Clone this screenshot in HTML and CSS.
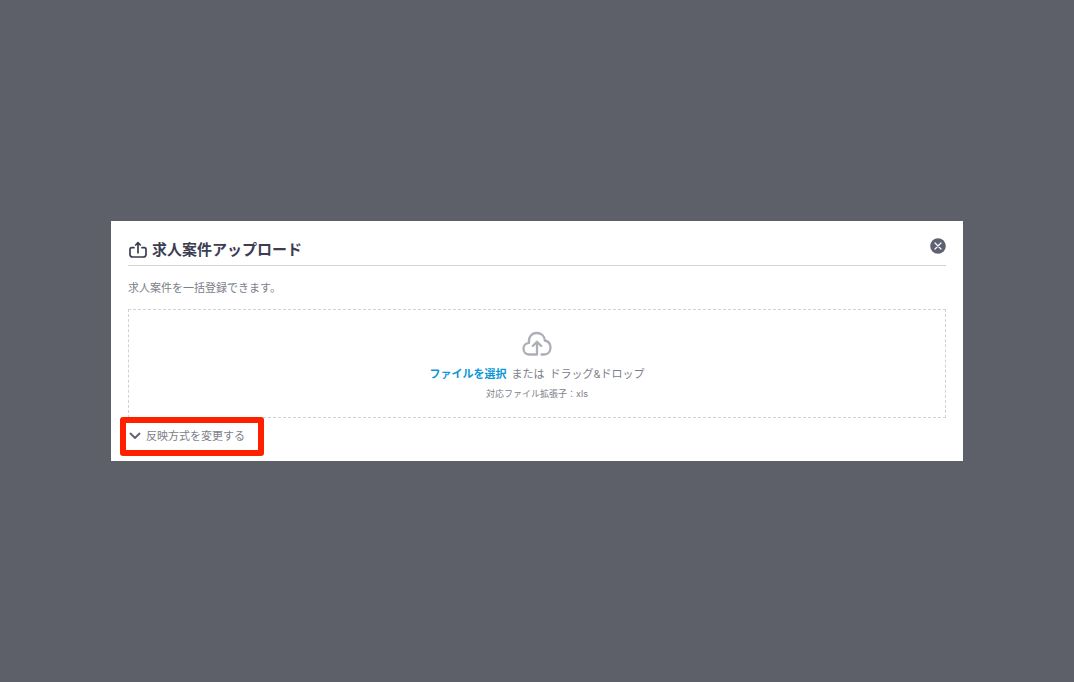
FILE: index.html
```html
<!DOCTYPE html>
<html lang="ja">
<head>
  <meta charset="UTF-8" />
  <meta name="viewport" content="width=device-width, initial-scale=1.0"/>
  <title>求人案件アップロード</title>
  <link rel="stylesheet" href="styles.css">
</head>
<body>
  <div class="modal" role="dialog" aria-labelledby="modal-title">
    <div class="modal-header">
      <svg class="icon-upload" viewBox="0 0 20 18" aria-hidden="true">
        <path d="M6 6.7H3.7Q2 6.7 2 8.4V13.2Q2 16 4.8 16H15.2Q18 16 18 13.2V8.4Q18 6.7 16.3 6.7H14M10 11.8V2M7.7 4L10 1.7L12.3 4"/>
      </svg>
      <h1 class="modal-title" id="modal-title">求人案件アップロード</h1>
      <button class="close" type="button" aria-label="閉じる">
        <svg viewBox="0 0 16 16" aria-hidden="true">
          <circle cx="8" cy="8" r="7.8"/>
          <path d="M5 5L11 11M11 5L5 11"/>
        </svg>
      </button>
    </div>

    <p class="lead">求人案件を一括登録できます。</p>

    <div class="dropzone">
      <svg class="icon-cloud" viewBox="0 0 30 26" aria-hidden="true">
        <path d="M15 23.5H7.5C4 23.5 1.5 21 1.5 17.7C1.5 14.5 4 12 7 11.8C6.2 6.5 9.5 2 14.7 2C19.3 2 22.6 5 22.8 9.5C26.3 10.2 28.5 13 28.5 16.5C28.5 20.5 25.8 23.5 22 23.5H19.5M15 23.5V11M10.8 15L15 10.8L19.2 15"/>
      </svg>
      <p class="drop-text"><a class="file-link" href="#">ファイルを選択</a><span>または</span><span>ドラッグ&amp;ドロップ</span></p>
      <p class="drop-note">対応ファイル拡張子：xls</p>
    </div>

    <button class="toggle" type="button">
      <svg class="icon-chevron" viewBox="0 0 12 8" aria-hidden="true">
        <path d="M1.5 1.5L6 6L10.5 1.5"/>
      </svg>
      反映方式を変更する
    </button>
  </div>
</body>
</html>
```
FILE: styles.css
```css
* {
  box-sizing: border-box;
}
body {
  margin: 0;
  padding: 0 111px;
  min-height: 100vh;
  display: flex;
  align-items: center;
  background: #5e6069;
  color: #7c7e89;
  font-family: Inter, "Noto Sans CJK JP", sans-serif;
  font-size: 11px;
  line-height: 16px;
}
h1, p {
  margin: 0;
}
svg {
  display: block;
  fill: none;
  stroke-linecap: round;
  stroke-linejoin: round;
}
button {
  padding: 0;
  border: none;
  background: none;
  color: inherit;
  font: inherit;
  cursor: pointer;
}
.modal {
  flex: 1;
  padding: 17px;
  background: #fff;
}
.modal-header {
  display: flex;
  align-items: center;
  gap: 4px;
  padding-bottom: 3px;
  border-bottom: 1px solid #d2d3d6;
}
.icon-upload {
  width: 20px;
  height: 18px;
  stroke: #3b3d50;
  stroke-width: 1.7;
}
.modal-title {
  flex: 1;
  color: #3b3d50;
  font-size: 15px;
  font-weight: 700;
  line-height: 24px;
}
.close {
  align-self: flex-start;
}
.close svg {
  width: 16px;
  height: 16px;
}
.close circle {
  fill: #5e6073;
}
.close path {
  stroke: #fff;
  stroke-width: 1.2;
}
.lead {
  padding: 14px 0 13px;
}
.dropzone {
  display: flex;
  flex-direction: column;
  align-items: center;
  padding: 21px 16px 15px;
  border: 1px dashed #d0d1d5;
}
.icon-cloud {
  width: 30px;
  height: 26px;
  stroke: #adafb7;
  stroke-width: 2.3;
}
.drop-text {
  display: flex;
  gap: 5px;
  margin: 9px 0 4px;
}
.file-link {
  color: #0b96d8;
  font-weight: 700;
  text-decoration: none;
}
.drop-note {
  font-size: 9px;
}
.toggle {
  position: relative;
  display: flex;
  align-items: center;
  gap: 5px;
  margin: 10px 0 0 1px;
}
/* 注目させる赤枠 */
.toggle::after {
  content: "";
  position: absolute;
  inset: -11px -19px -12px -9px;
  border: 6px solid #ff2000;
  border-radius: 3px;
}
.icon-chevron {
  width: 12px;
  height: 8px;
  stroke: #5e6073;
  stroke-width: 1.8;
}
```
